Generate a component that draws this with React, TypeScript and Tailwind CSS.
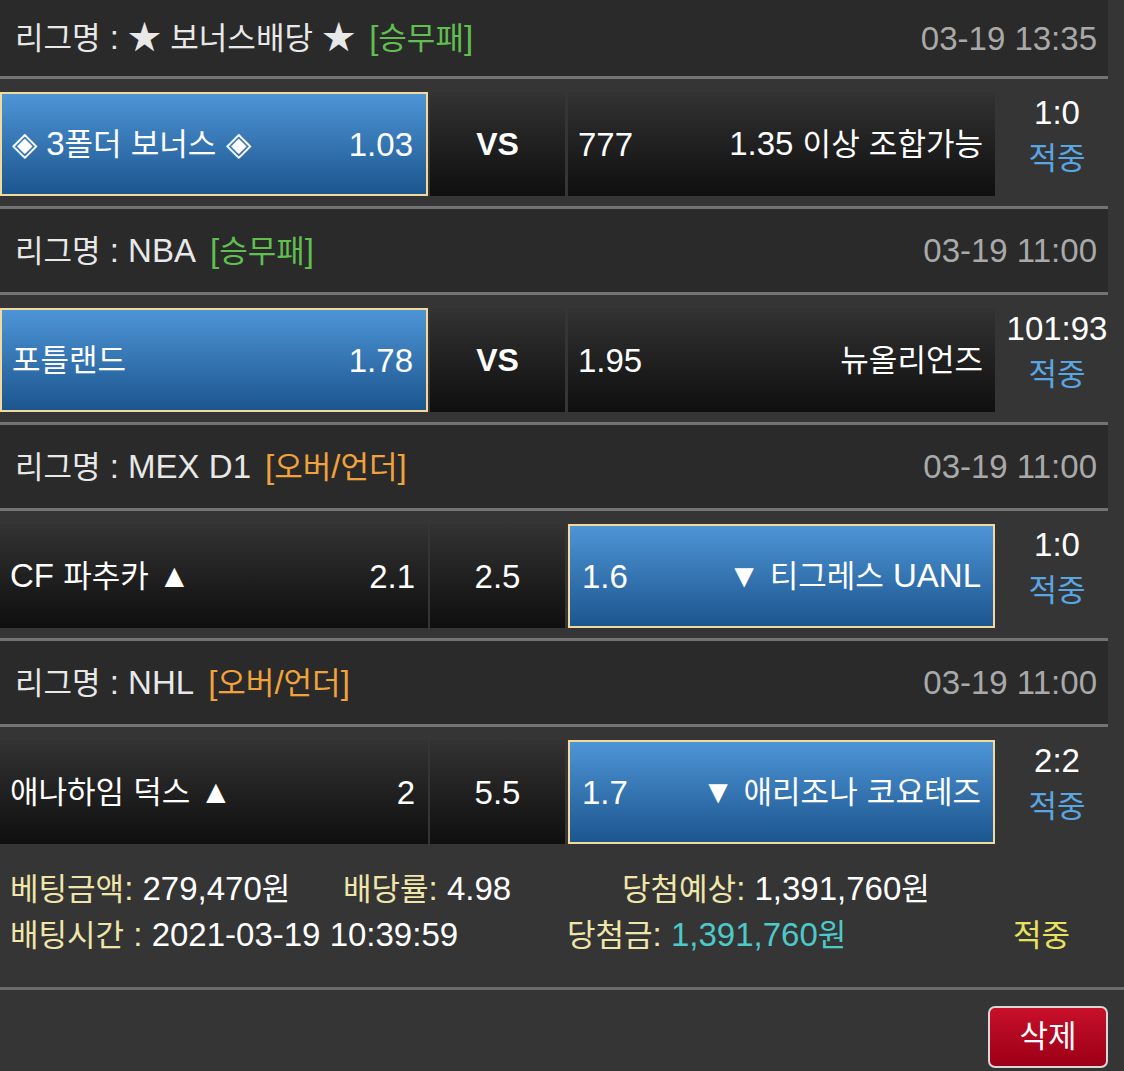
import React from "react";

type Side = { name: string; odds: string };

type Game = {
  league: string;
  type: string;
  typeColor: string;
  date: string;
  home: Side;
  mid: string;
  away: Side;
  pick: "home" | "away";
  score: string;
};

const games: Game[] = [
  {
    league: "★ 보너스배당 ★",
    type: "[승무패]",
    typeColor: "text-[#5fbf4f]",
    date: "03-19 13:35",
    home: { name: "◈ 3폴더 보너스 ◈", odds: "1.03" },
    mid: "VS",
    away: { name: "1.35 이상 조합가능", odds: "777" },
    pick: "home",
    score: "1:0",
  },
  {
    league: "NBA",
    type: "[승무패]",
    typeColor: "text-[#5fbf4f]",
    date: "03-19 11:00",
    home: { name: "포틀랜드", odds: "1.78" },
    mid: "VS",
    away: { name: "뉴올리언즈", odds: "1.95" },
    pick: "home",
    score: "101:93",
  },
  {
    league: "MEX D1",
    type: "[오버/언더]",
    typeColor: "text-[#f0a23c]",
    date: "03-19 11:00",
    home: { name: "CF 파추카 ▲", odds: "2.1" },
    mid: "2.5",
    away: { name: "▼ 티그레스 UANL", odds: "1.6" },
    pick: "away",
    score: "1:0",
  },
  {
    league: "NHL",
    type: "[오버/언더]",
    typeColor: "text-[#f0a23c]",
    date: "03-19 11:00",
    home: { name: "애나하임 덕스 ▲", odds: "2" },
    mid: "5.5",
    away: { name: "▼ 애리조나 코요테즈", odds: "1.7" },
    pick: "away",
    score: "2:2",
  },
];

// hangul runs get a slightly smaller size so they sit closer to the original phone font
const HANGUL = /([\uAC00-\uD7A3]+)/;

function T({ children }: { children: string }) {
  return (
    <>
      {children.split(HANGUL).map((part, i) =>
        HANGUL.test(part) ? (
          <span key={i} className="text-[0.94em]">
            {part}
          </span>
        ) : (
          <React.Fragment key={i}>{part}</React.Fragment>
        )
      )}
    </>
  );
}

const blueCell =
  "border-2 border-[#f2da9c] bg-gradient-to-b from-[#4e95d6] to-[#1c568f]";
const darkCell = "bg-gradient-to-b from-[#333333] to-[#0f0f0f]";

function GameBlock({ game, first, last }: { game: Game; first: boolean; last: boolean }) {
  const homeBlue = game.pick === "home";
  return (
    <div>
      <div
        className={`mr-[16px] flex items-center justify-between bg-[#2a2a2a] pl-[15px] pr-[11px] border-b-[3px] border-[#737373] ${
          first ? "h-[79px]" : "h-[86px]"
        }`}
      >
        <div className="text-[#e8e8e8]">
          <T>{"리그명 : " + game.league}</T>
          <span className={`ml-[14px] ${game.typeColor}`}>
            <T>{game.type}</T>
          </span>
        </div>
        <div className="text-[#a9a9a9]">{game.date}</div>
      </div>

      <div className={last ? "" : "mr-[16px] border-b-[3px] border-[#737373]"}>
        <div className={`flex h-[127px] pt-[13px] ${last ? "" : "-mr-[16px]"}`}>
          <div
            className={`flex h-[104px] w-[428px] items-center justify-between pl-[10px] pr-[13px] text-white ${
              homeBlue ? blueCell : darkCell
            }`}
          >
            <span>
              <T>{game.home.name}</T>
            </span>
            <span>{game.home.odds}</span>
          </div>
          <div
            className={`ml-[2px] flex h-[104px] w-[135px] items-center justify-center text-white ${darkCell} ${
              game.mid === "VS" ? "font-bold text-[32px]" : ""
            }`}
          >
            {game.mid}
          </div>
          <div
            className={`ml-[3px] flex h-[104px] w-[427px] items-center justify-between pr-[12px] text-white ${
              homeBlue ? darkCell + " pl-[10px]" : blueCell + " pl-[12px]"
            }`}
          >
            <span>{game.away.odds}</span>
            <span>
              <T>{game.away.name}</T>
            </span>
          </div>
          <div className="-mt-[2px] flex flex-1 flex-col items-center pr-[5px] leading-[45px]">
            <span className="text-white">{game.score}</span>
            <span className="text-[#5aa6e2]">
              <T>적중</T>
            </span>
          </div>
        </div>
      </div>
    </div>
  );
}

export default function App() {
  return (
    <div
      className="min-h-[1071px] w-full bg-[#353535] text-[33px] leading-none"
      style={{ fontFamily: '"Liberation Sans", "Noto Sans CJK KR", sans-serif' }}
    >
      {games.map((g, i) => (
        <GameBlock key={i} game={g} first={i === 0} last={i === games.length - 1} />
      ))}

      <div className="border-b-[3px] border-[#6c6c6c] pt-[12px] pb-[29px] pl-[10px] leading-[45px]">
        <div className="flex">
          <div className="w-[333px]">
            <span className="text-[#efe6aa]">
              <T>베팅금액:</T>
            </span>{" "}
            <span className="text-white">
              <T>279,470원</T>
            </span>
          </div>
          <div className="w-[279px]">
            <span className="text-[#efe6aa]">
              <T>배당률:</T>
            </span>{" "}
            <span className="text-white">4.98</span>
          </div>
          <div>
            <span className="text-[#efe6aa]">
              <T>당첨예상:</T>
            </span>{" "}
            <span className="text-white">
              <T>1,391,760원</T>
            </span>
          </div>
        </div>
        <div className="flex">
          <div className="w-[557px]">
            <span className="text-[#efe6aa]">
              <T>배팅시간 :</T>
            </span>{" "}
            <span className="text-white">2021-03-19 10:39:59</span>
          </div>
          <div className="w-[446px]">
            <span className="text-[#efe6aa]">
              <T>당첨금:</T>
            </span>{" "}
            <span className="text-[#4cc9c9]">
              <T>1,391,760원</T>
            </span>
          </div>
          <div className="text-[#e9e25e]">
            <T>적중</T>
          </div>
        </div>
      </div>

      <div className="flex h-[83px] justify-end pt-[16px] pr-[16px]">
        <button className="flex h-[62px] w-[120px] items-center justify-center rounded-[7px] border-2 border-[#d8d8d8] bg-gradient-to-b from-[#c8102a] to-[#9c0016] text-white">
          <T>삭제</T>
        </button>
      </div>
    </div>
  );
}
